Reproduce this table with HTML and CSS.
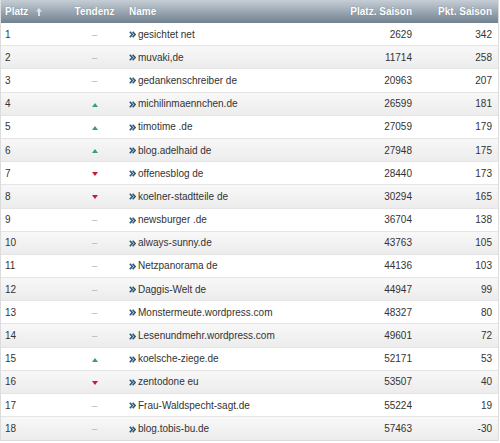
FILE: index.html
```html
<!DOCTYPE html>
<html>
<head>
<meta charset="utf-8">
<link rel="stylesheet" href="styles.css">
</head>
<body>
<svg width="0" height="0" style="position:absolute">
  <defs>
    <symbol id="chev" viewBox="0 0 7 7">
      <path d="M0.8 0.8 L3.3 3.5 L0.8 6.2 M3.6 0.8 L6.1 3.5 L3.6 6.2" fill="none" stroke="#2c5877" stroke-width="1.6"/>
    </symbol>
  </defs>
</svg>
<div class="tbl">
  <div class="row head">
    <div class="c platz">Platz <svg class="sort" width="6" height="8" viewBox="0 0 6 8"><path d="M3 0 L6 3.5 H4 V8 H2 V3.5 H0 Z" fill="#dfe5ea"/></svg></div>
    <div class="c tend">Tendenz</div>
    <div class="c name">Name</div>
    <div class="c num">Platz. Saison</div>
    <div class="c num last">Pkt. Saison</div>
  </div>
  <div class="row"><div class="c platz">1</div><div class="c tend"><span class="dash">–</span></div><div class="c name"><svg class="arr"><use href="#chev"/></svg>gesichtet net</div><div class="c num">2629</div><div class="c num last">342</div></div>
  <div class="row alt"><div class="c platz">2</div><div class="c tend"><span class="dash">–</span></div><div class="c name"><svg class="arr"><use href="#chev"/></svg>muvaki,de</div><div class="c num">11714</div><div class="c num last">258</div></div>
  <div class="row"><div class="c platz">3</div><div class="c tend"><span class="dash">–</span></div><div class="c name"><svg class="arr"><use href="#chev"/></svg>gedankenschreiber de</div><div class="c num">20963</div><div class="c num last">207</div></div>
  <div class="row alt"><div class="c platz">4</div><div class="c tend"><span class="up"></span></div><div class="c name"><svg class="arr"><use href="#chev"/></svg>michilinmaennchen.de</div><div class="c num">26599</div><div class="c num last">181</div></div>
  <div class="row"><div class="c platz">5</div><div class="c tend"><span class="up"></span></div><div class="c name"><svg class="arr"><use href="#chev"/></svg>timotime .de</div><div class="c num">27059</div><div class="c num last">179</div></div>
  <div class="row alt"><div class="c platz">6</div><div class="c tend"><span class="up"></span></div><div class="c name"><svg class="arr"><use href="#chev"/></svg>blog.adelhaid de</div><div class="c num">27948</div><div class="c num last">175</div></div>
  <div class="row"><div class="c platz">7</div><div class="c tend"><span class="down"></span></div><div class="c name"><svg class="arr"><use href="#chev"/></svg>offenesblog de</div><div class="c num">28440</div><div class="c num last">173</div></div>
  <div class="row alt"><div class="c platz">8</div><div class="c tend"><span class="down"></span></div><div class="c name"><svg class="arr"><use href="#chev"/></svg>koelner-stadtteile de</div><div class="c num">30294</div><div class="c num last">165</div></div>
  <div class="row"><div class="c platz">9</div><div class="c tend"><span class="dash">–</span></div><div class="c name"><svg class="arr"><use href="#chev"/></svg>newsburger .de</div><div class="c num">36704</div><div class="c num last">138</div></div>
  <div class="row alt"><div class="c platz">10</div><div class="c tend"><span class="dash">–</span></div><div class="c name"><svg class="arr"><use href="#chev"/></svg>always-sunny.de</div><div class="c num">43763</div><div class="c num last">105</div></div>
  <div class="row"><div class="c platz">11</div><div class="c tend"><span class="dash">–</span></div><div class="c name"><svg class="arr"><use href="#chev"/></svg>Netzpanorama de</div><div class="c num">44136</div><div class="c num last">103</div></div>
  <div class="row alt"><div class="c platz">12</div><div class="c tend"><span class="dash">–</span></div><div class="c name"><svg class="arr"><use href="#chev"/></svg>Daggis-Welt de</div><div class="c num">44947</div><div class="c num last">99</div></div>
  <div class="row"><div class="c platz">13</div><div class="c tend"><span class="dash">–</span></div><div class="c name"><svg class="arr"><use href="#chev"/></svg>Monstermeute.wordpress.com</div><div class="c num">48327</div><div class="c num last">80</div></div>
  <div class="row alt"><div class="c platz">14</div><div class="c tend"><span class="dash">–</span></div><div class="c name"><svg class="arr"><use href="#chev"/></svg>Lesenundmehr.wordpress.com</div><div class="c num">49601</div><div class="c num last">72</div></div>
  <div class="row"><div class="c platz">15</div><div class="c tend"><span class="up"></span></div><div class="c name"><svg class="arr"><use href="#chev"/></svg>koelsche-ziege.de</div><div class="c num">52171</div><div class="c num last">53</div></div>
  <div class="row alt"><div class="c platz">16</div><div class="c tend"><span class="down"></span></div><div class="c name"><svg class="arr"><use href="#chev"/></svg>zentodone eu</div><div class="c num">53507</div><div class="c num last">40</div></div>
  <div class="row"><div class="c platz">17</div><div class="c tend"><span class="dash">–</span></div><div class="c name"><svg class="arr"><use href="#chev"/></svg>Frau-Waldspecht-sagt.de</div><div class="c num">55224</div><div class="c num last">19</div></div>
  <div class="row alt"><div class="c platz">18</div><div class="c tend"><span class="dash">–</span></div><div class="c name"><svg class="arr"><use href="#chev"/></svg>blog.tobis-bu.de</div><div class="c num">57463</div><div class="c num last">-30</div></div>
</div>
</body>
</html>
```
FILE: styles.css
```css
html, body {
  margin: 0;
  padding: 0;
  background: #fff;
}
body {
  font-family: "Liberation Sans", Arial, sans-serif;
  font-size: 10px;
  color: #333;
}
.tbl {
  width: 497px;
  border-left: 1px solid #dcdcdc;
  border-right: 1px solid #dcdcdc;
  border-bottom: 1px solid #dcdcdc;
}
.row {
  display: grid;
  grid-template-columns: 62px 63px 1fr 93px 80px;
  height: 23.2px;
  box-sizing: border-box;
  border-bottom: 1px solid #e4e4e4;
  align-items: center;
}
.row:last-child {
  border-bottom: none;
}
.row.alt {
  background: linear-gradient(#f8f8f8, #ececec);
}
.head {
  height: 23px;
  border-bottom: none;
  background: linear-gradient(#c6ced5, #9ba8b3 50%, #708190);
  color: #fff;
  font-weight: bold;
  text-shadow: 0 0 1px rgba(60, 75, 90, 0.5);
}
.c {
  white-space: nowrap;
}
.platz {
  padding-left: 4px;
}
.tend {
  text-align: center;
}
.name {
  padding-left: 3px;
}
.num {
  text-align: right;
  padding-right: 6px;
}
.sort {
  margin-left: 5px;
  vertical-align: -1px;
}
.dash {
  color: #b8b8b8;
}
.arr {
  width: 7px;
  height: 7px;
  margin-right: 2px;
  vertical-align: -0.5px;
}
.up, .down {
  display: inline-block;
  width: 0;
  height: 0;
  border-left: 3.5px solid transparent;
  border-right: 3.5px solid transparent;
  vertical-align: middle;
}
.up {
  border-bottom: 4px solid #3a9c7f;
}
.down {
  border-top: 4px solid #c41a35;
}
```
